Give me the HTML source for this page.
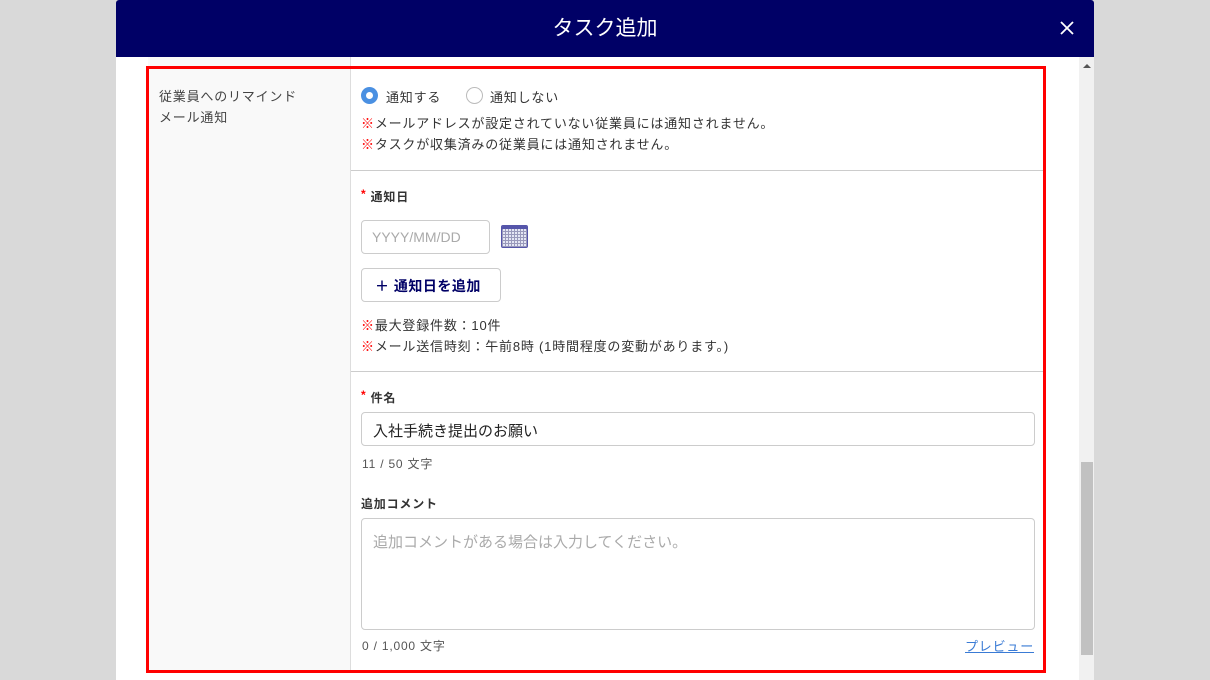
<!DOCTYPE html>
<html><head><meta charset="utf-8"><style>
*{box-sizing:border-box;margin:0;padding:0}
body{width:1210px;height:680px;background:#d9d9d9;position:relative;overflow:hidden;font-family:"Liberation Sans","Noto Sans CJK JP",sans-serif;color:#333;font-size:13px}
.a{position:absolute}
.hdr{left:116px;top:0;width:978px;height:57px;background:#000066;color:#fff;font-size:21px;text-align:center;line-height:57px;border-radius:3px 3px 0 0}
.body{left:116px;top:57px;width:978px;height:623px;background:#fff}
.red{left:146px;top:66px;width:900px;height:607px;border:3px solid #f00}
.t{font-size:13px;white-space:nowrap;letter-spacing:0.8px}
.inp{border:1px solid #ccc;border-radius:4px;background:#fff;letter-spacing:0}
.rm{color:#f00}
</style></head><body>
<div class="a hdr">タスク追加<svg style="position:absolute;right:20px;top:21px" width="14" height="14" viewBox="0 0 14 14"><path d="M1 1L13 13M13 1L1 13" stroke="#fff" stroke-width="1.8"/></svg></div>
<div class="a body"></div>
<div class="a" style="left:148px;top:57px;width:202px;height:616px;background:#f9f9f9"></div>
<div class="a" style="left:350px;top:57px;width:1px;height:616px;background:#ddd"></div>
<div class="a" style="left:351px;top:170px;width:693px;height:1px;background:#ccc"></div>
<div class="a" style="left:351px;top:371px;width:693px;height:1px;background:#ccc"></div>
<div class="a" style="left:1079px;top:57px;width:15px;height:623px;background:#f1f1f1"></div>
<div class="a" style="left:1081px;top:462px;width:12px;height:193px;background:#c1c1c1"></div>
<div class="a" style="left:1083px;top:64px;width:0;height:0;border-left:4px solid transparent;border-right:4px solid transparent;border-bottom:4px solid #555"></div>
<div class="a red"></div>

<div class="a t" style="left:159px;top:86px;line-height:21px;color:#444">従業員へのリマインド<br>メール通知</div>

<div class="a" style="left:361px;top:87px;width:17px;height:17px;border-radius:50%;background:#4a90e2"><div style="margin:5px;width:7px;height:7px;border-radius:50%;background:#fff"></div></div>
<div class="a t" style="left:386px;top:87px">通知する</div>
<div class="a" style="left:466px;top:87px;width:17px;height:17px;border-radius:50%;border:1px solid #bbb;background:#fff"></div>
<div class="a t" style="left:490px;top:87px">通知しない</div>
<div class="a t" style="left:361px;top:113px"><span class="rm">※</span>メールアドレスが設定されていない従業員には通知されません。</div>
<div class="a t" style="left:361px;top:134px"><span class="rm">※</span>タスクが収集済みの従業員には通知されません。</div>

<div class="a t" style="left:361px;top:187px;font-size:12px;font-weight:bold"><span class="rm" style="vertical-align:3px">*</span> 通知日</div>
<div class="a inp" style="left:361px;top:220px;width:129px;height:34px;color:#aaa;padding:8px 10px;font-size:14px">YYYY/MM/DD</div>
<div class="a" style="left:501px;top:225px;width:27px;height:23px;border:1px solid #55a;border-radius:2px;background:repeating-linear-gradient(90deg,#99b 0 1px,transparent 1px 3px),repeating-linear-gradient(0deg,#99b 0 1px,#e4e6f4 1px 3px);box-shadow:inset 0 3px 0 #55a"></div>
<div class="a inp" style="left:361px;top:268px;width:140px;height:34px;color:#000066;font-weight:bold;font-size:14px;padding:7px 0 0 13px;letter-spacing:0.5px">＋ 通知日を追加</div>
<div class="a t" style="left:361px;top:315px"><span class="rm">※</span>最大登録件数：10件</div>
<div class="a t" style="left:361px;top:336px"><span class="rm">※</span>メール送信時刻：午前8時 (1時間程度の変動があります。)</div>

<div class="a t" style="left:361px;top:388px;font-size:12px;font-weight:bold"><span class="rm" style="vertical-align:3px">*</span> 件名</div>
<div class="a inp" style="left:361px;top:412px;width:674px;height:34px;padding:7px 11px;font-size:15px;color:#222">入社手続き提出のお願い</div>
<div class="a t" style="left:362px;top:455px;font-size:12px;color:#555">11 / 50 文字</div>
<div class="a t" style="left:361px;top:495px;font-size:12px;font-weight:bold">追加コメント</div>
<div class="a inp" style="left:361px;top:518px;width:674px;height:112px;padding:12px 11px;font-size:15px;color:#aaa">追加コメントがある場合は入力してください。</div>
<div class="a t" style="left:362px;top:637px;font-size:12px;color:#555">0 / 1,000 文字</div>
<div class="a t" style="left:965px;top:636px;color:#3a7bd5;text-decoration:underline">プレビュー</div>
</body></html>
